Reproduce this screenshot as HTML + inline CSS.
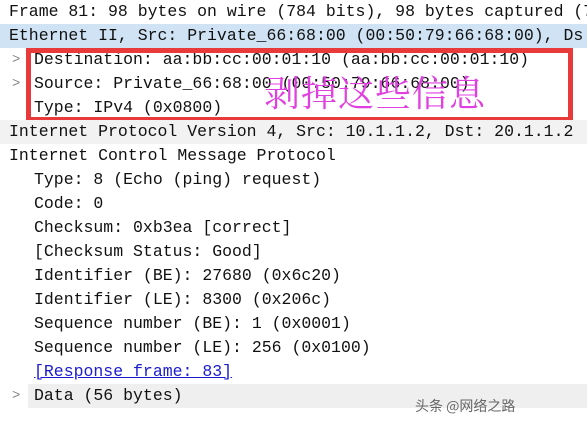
<!DOCTYPE html>
<html><head><meta charset="utf-8"><style>
body{margin:0;width:587px;height:425px;background:#fff;overflow:hidden;position:relative;font-family:"Liberation Mono",monospace;font-size:16.5px;color:#111}
.r{position:absolute;left:0;width:587px;height:24px;line-height:24px;white-space:nowrap;overflow:hidden}
.a{position:absolute;left:12px;color:#888;font-size:14px}
</style></head><body>
<div class="r" style="top:0"><span style="margin-left:9px">Frame 81: 98 bytes on wire (784 bits), 98 bytes captured (7</span></div>
<div class="r" style="top:24px;background:#cfe3f5"><span style="margin-left:9px">Ethernet II, Src: Private_66:68:00 (00:50:79:66:68:00), Ds</span></div>
<div class="r" style="top:48px"><span class="a">&gt;</span><span style="margin-left:34px">Destination: aa:bb:cc:00:01:10 (aa:bb:cc:00:01:10)</span></div>
<div class="r" style="top:72px"><span class="a">&gt;</span><span style="margin-left:34px">Source: Private_66:68:00 (00:50:79:66:68:00)</span></div>
<div class="r" style="top:96px"><span style="margin-left:34px">Type: IPv4 (0x0800)</span></div>
<div style="position:absolute;left:26px;top:48px;width:537px;height:64px;border:5px solid #e83a3a"></div>
<div style="position:absolute;left:264px;top:70px;font-family:'Noto Serif CJK SC','Noto Sans CJK SC',serif;font-size:36px;line-height:44px;color:#e040e0;letter-spacing:1px">剥掉这些信息</div>
<div class="r" style="top:120px;background:#f2f2f2"><span style="margin-left:9px">Internet Protocol Version 4, Src: 10.1.1.2, Dst: 20.1.1.2</span></div>
<div class="r" style="top:144px"><span style="margin-left:9px">Internet Control Message Protocol</span></div>
<div class="r" style="top:168px"><span style="margin-left:34px">Type: 8 (Echo (ping) request)</span></div>
<div class="r" style="top:192px"><span style="margin-left:34px">Code: 0</span></div>
<div class="r" style="top:216px"><span style="margin-left:34px">Checksum: 0xb3ea [correct]</span></div>
<div class="r" style="top:240px"><span style="margin-left:34px">[Checksum Status: Good]</span></div>
<div class="r" style="top:264px"><span style="margin-left:34px">Identifier (BE): 27680 (0x6c20)</span></div>
<div class="r" style="top:288px"><span style="margin-left:34px">Identifier (LE): 8300 (0x206c)</span></div>
<div class="r" style="top:312px"><span style="margin-left:34px">Sequence number (BE): 1 (0x0001)</span></div>
<div class="r" style="top:336px"><span style="margin-left:34px">Sequence number (LE): 256 (0x0100)</span></div>
<div class="r" style="top:360px"><span style="margin-left:34px;color:#1a1ad0;text-decoration:underline">[Response frame: 83]</span></div>
<div class="r" style="top:384px;left:28px;width:559px;background:#efefef"></div>
<div class="r" style="top:384px"><span class="a">&gt;</span><span style="margin-left:34px">Data (56 bytes)</span></div>
<div style="position:absolute;left:415px;top:396px;font-family:'Noto Sans CJK SC',sans-serif;font-size:14px;color:#666">头条 @网络之路</div>
</body></html>
